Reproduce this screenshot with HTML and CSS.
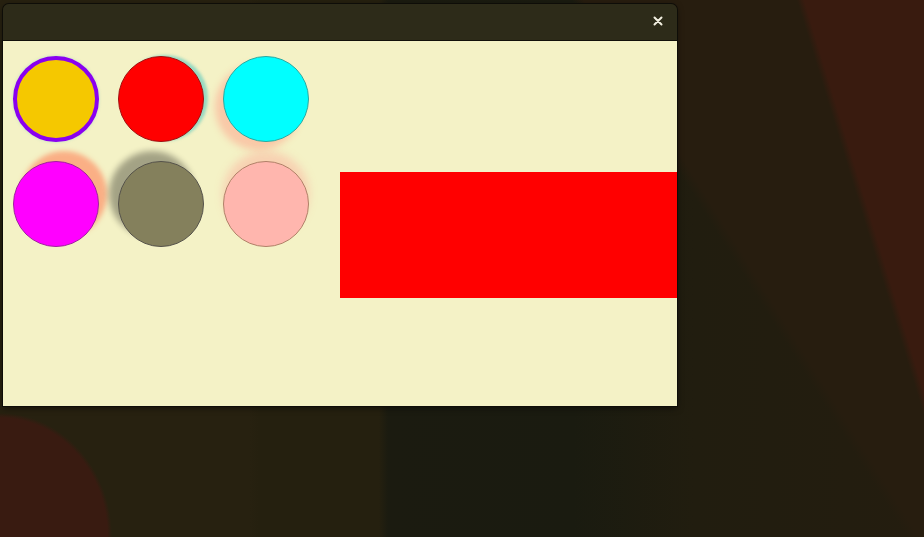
FILE: index.html
```html
<!DOCTYPE html>
<html>
<head>
<meta charset="utf-8">
<link rel="stylesheet" href="styles.css">
</head>
<body>
<div class="desktop">
  <div class="window">
    <div class="titlebar">
      <button class="close" aria-label="Close">
        <svg width="10" height="10" viewBox="0 0 10 10"><path d="M1.5 1.5 L8.5 8.5 M8.5 1.5 L1.5 8.5" stroke="#f2efe0" stroke-width="2" stroke-linecap="round"/></svg>
      </button>
    </div>
    <div class="content">
      <div class="swatches">
        <div class="dot dot-gold"></div>
        <div class="dot dot-red"></div>
        <div class="dot dot-cyan"></div>
        <div class="dot dot-magenta"></div>
        <div class="dot dot-gray"></div>
        <div class="dot dot-pink"></div>
      </div>
      <div class="block"></div>
    </div>
  </div>
</div>
</body>
</html>
```
FILE: styles.css
```css
html, body {
  margin: 0;
  padding: 0;
  width: 924px;
  height: 537px;
  overflow: hidden;
  font-family: "DejaVu Sans", sans-serif;
}
.desktop {
  position: relative;
  width: 924px;
  height: 537px;
  background:
    radial-gradient(ellipse 112px 124px at 0 537px, #391b11 96%, rgba(57,27,17,0) 100%),
    linear-gradient(73deg, rgba(57,27,15,0) 88.3%, #391b0f 89%, #391b0f 100%),
    linear-gradient(58deg, rgba(40,28,14,0) 72%, #271d0f 73%, #271d0f 100%),
    linear-gradient(90deg, #272110 0%, #272110 27%, #25200f 28%, #25200f 41%, #1b1b10 42%, #1a1b10 62%, #211d0f 75%, #241d0f 100%);
}
.window {
  position: absolute;
  left: 3px;
  top: 4px;
  width: 674px;
  height: 402px;
  display: flex;
  flex-direction: column;
  border-radius: 6px 6px 0 0;
  overflow: hidden;
  box-shadow: 0 0 0 1px #0e0d08, 0 2px 6px rgba(0,0,0,0.5);
}
.titlebar {
  height: 36px;
  flex: none;
  background: #2d2b19;
  border-bottom: 1px solid #12110a;
  display: flex;
  align-items: center;
  justify-content: flex-end;
  padding-right: 12px;
}
.close {
  width: 14px;
  height: 14px;
  padding: 0;
  margin-top: -2px;
  border: none;
  background: transparent;
  display: flex;
  align-items: center;
  justify-content: center;
}
.content {
  flex: 1;
  background: #f4f2c6;
  display: flex;
  align-items: flex-start;
  padding: 15px 0 0 10px;
  overflow: hidden;
}
.swatches {
  display: grid;
  grid-template-columns: repeat(3, 86px);
  grid-auto-rows: 86px;
  gap: 19px;
  flex: none;
}
.dot {
  box-sizing: border-box;
  border-radius: 50%;
  border: 1px solid;
}
.dot-gold {
  background: #f5c800;
  border: 4px solid #8a00f0;
  box-shadow: 0 0 3px rgba(120,200,200,0.5);
}
.dot-red {
  background: #ff0000;
  border-color: #a01010;
  box-shadow: 4px -1px 3px rgba(90,200,190,0.6);
}
.dot-cyan {
  background: #00ffff;
  border-color: #2aa8a0;
  box-shadow: -8px 8px 7px rgba(255,150,130,0.45);
}
.dot-magenta {
  background: #ff00ff;
  border-color: #a020a0;
  box-shadow: 8px -10px 5px rgba(255,120,80,0.55);
}
.dot-gray {
  background: #84805c;
  border-color: #55524a;
  box-shadow: -9px -10px 6px rgba(0,0,0,0.33);
}
.dot-pink {
  background: #ffb6ae;
  border-color: #b08068;
  box-shadow: 0 -10px 8px rgba(255,150,140,0.35);
}
.block {
  flex: none;
  width: 400px;
  height: 126px;
  margin: 116px 0 0 31px;
  background: #ff0000;
}
```
